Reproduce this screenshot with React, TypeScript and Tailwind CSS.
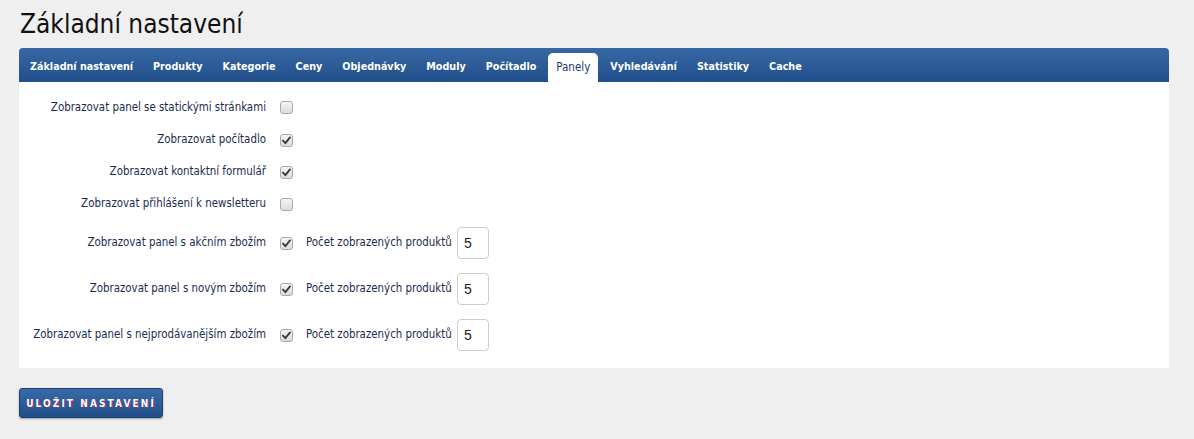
import React from 'react';

const tabs = [
  'Základní nastavení',
  'Produkty',
  'Kategorie',
  'Ceny',
  'Objednávky',
  'Moduly',
  'Počítadlo',
  'Panely',
  'Vyhledávání',
  'Statistiky',
  'Cache',
];

const rows = [
  { label: 'Zobrazovat panel se statickými stránkami', checked: false },
  { label: 'Zobrazovat počítadlo', checked: true },
  { label: 'Zobrazovat kontaktní formulář', checked: true },
  { label: 'Zobrazovat přihlášení k newsletteru', checked: false },
  { label: 'Zobrazovat panel s akčním zbožím', checked: true, count: 5 },
  { label: 'Zobrazovat panel s novým zbožím', checked: true, count: 5 },
  { label: 'Zobrazovat panel s nejprodávanějším zbožím', checked: true, count: 5 },
];

const Checkbox: React.FC<{ checked: boolean }> = ({ checked }) => (
  <span className="w-[13px] h-[13px] rounded-[3px] border border-[#a9a9a9] bg-gradient-to-b from-[#f4f4f4] to-[#dcdcdc] flex items-center justify-center shrink-0">
    {checked && (
      <svg width="9" height="9" viewBox="0 0 9 9">
        <path d="M1 4.6 L3.4 7.2 L8 1.4" fill="none" stroke="#3c3c3c" strokeWidth="1.9" strokeLinecap="round" strokeLinejoin="round" />
      </svg>
    )}
  </span>
);

const App: React.FC = () => {
  return (
    <div className="w-[1194px] h-[439px] bg-[#efefef] font-['DejaVu_Sans_Condensed','DejaVu_Sans',sans-serif] overflow-hidden">
      <div className="pl-[19px] pr-[25px] pt-[7px]">
        {/* Title */}
        <h1 className="text-[26px] leading-[34px] text-[#111] pl-px">Základní nastavení</h1>

        {/* Tab bar */}
        <div className="mt-[7px] h-[34px] rounded-t-[4px] bg-gradient-to-b from-[#3868a3] to-[#214f8b] flex items-end pl-px">
          {tabs.map((t) => (
            <div
              key={t}
              className={`mx-[2px] px-2 h-[29px] flex items-center rounded-t-[5px] ${
                t === 'Panely' ? 'bg-white text-[#1d3a6b] text-[11.5px]' : 'text-white font-bold text-[10.7px]'
              }`}
            >
              {t}
            </div>
          ))}
        </div>

        {/* Panel */}
        <div className="bg-white pt-[9px] pb-[10px]">
          {rows.map((r, i) => (
            <div key={r.label} className={`flex items-center ${r.count ? 'h-[46px]' : i === 0 ? 'h-[33px]' : 'h-8'}`}>
              <div className="w-[247px] text-right text-[11.4px] text-[#1b2c52] whitespace-nowrap">{r.label}</div>
              <div className="ml-[14px]">
                <Checkbox checked={r.checked} />
              </div>
              {r.count !== undefined && (
                <div className="flex items-center ml-[13px]">
                  <span className="w-[146px] text-[11.4px] text-[#1b2c52] whitespace-nowrap">Počet zobrazených produktů</span>
                  <div className="ml-[5px] w-[32px] h-[32px] border border-[#cccccc] rounded-[4px] flex items-center pl-[6px] text-[14px] text-[#222] font-['Liberation_Sans',sans-serif]">
                    {r.count}
                  </div>
                </div>
              )}
            </div>
          ))}
        </div>

        {/* Save button */}
        <button className="mt-[20px] w-[144px] h-[30px] rounded-[3px] border border-[#1b4176] bg-gradient-to-b from-[#3a6aa6] to-[#1f4e89] shadow-[0_1px_2px_rgba(0,0,0,0.35)] text-white text-[10px] font-bold tracking-[2.1px] [text-shadow:1px_1px_0_rgba(180,40,90,0.7)] flex items-center justify-center">
          ULOŽIT NASTAVENÍ
        </button>
      </div>
    </div>
  );
};

export default App;
